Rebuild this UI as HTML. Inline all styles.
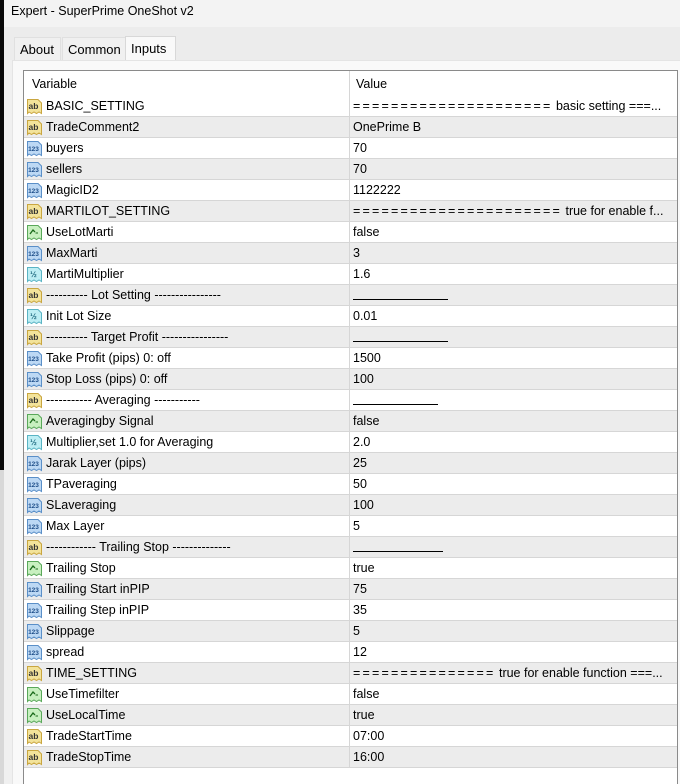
<!DOCTYPE html>
<html><head><meta charset="utf-8"><style>
*{margin:0;padding:0;box-sizing:border-box}
html,body{width:680px;height:784px;overflow:hidden}
body{background:#f0f0f0;font-family:"Liberation Sans","Noto Sans CJK SC",sans-serif;font-size:12.5px;color:#000;position:relative}
.strip{position:absolute;left:0;top:0;width:4px;height:470px;background:#080808}
.strip2{position:absolute;left:0;top:470px;width:4px;height:314px;background:#d8d8d8}
.title{position:absolute;left:4px;top:0;right:0;height:27px;background:#f3f3f3;padding:4px 0 0 7px;font-size:12.5px}
.tabs{position:absolute;left:4px;top:27px;right:0;height:33px;background:#ececec}
.tab{position:absolute;top:10px;height:23px;border:1px solid #e0e0e0;border-bottom:none;background:#f0f0f0;padding:4px 5px 0;font-size:13px}
.panel{position:absolute;left:12px;top:60px;right:0;bottom:0;background:#f9f9f9;border-left:1px solid #e4e4e4;border-top:1px solid #e4e4e4}
.tbl{position:absolute;left:23px;top:70px;width:655px;height:714px;background:#fff;border:1px solid #8a8a8a;border-bottom:none;overflow:hidden}
.hdr{position:absolute;left:0;top:0;width:100%;height:25px}
.hdr span{position:absolute;top:6px}
.row{position:absolute;left:0;width:100%;height:21px;border-bottom:1px solid #d6d6d6}
.row.g{background:#ececec}
.row .n{position:absolute;left:22px;top:3px;white-space:nowrap}
.row .v{position:absolute;left:329px;top:3px;white-space:nowrap}
.row svg{position:absolute;left:2px;top:2px}
.div{position:absolute;left:325px;top:0;width:1px;height:697px;background:#d6d6d6;z-index:2}
.line{display:inline-block;border-bottom:1px solid #000;height:12px}
.eq{letter-spacing:2.2px}
</style></head><body>
<div class="strip"></div><div class="strip2"></div>
<div class="title">Expert - SuperPrime OneShot v2</div>
<div class="tabs">
<div class="tab" style="left:10px;width:47px">About</div>
<div class="tab" style="left:58px;width:66px">Common</div>
<div class="tab" style="left:121px;top:9px;height:24px;width:51px;background:#f9f9f9;border-color:#d8d8d8">Inputs</div>
</div>
<div class="panel"></div>
<div class="tbl">
<div class="hdr"><span style="left:8px">Variable</span><span style="left:332px">Value</span></div>
<div id="rows"></div>
<div class="div"></div>
</div>
<script>
var I={
ab:['#f3e39a','#c9a640','ab','#333'],
n:['#bcd8f4','#5a8fc8','123','#1f4f8a'],
h:['#bdeef4','#5ab4c4','½','#1f6a80'],
b:['#c8f0c0','#5aa85a','~','#1a6a1a']};
function ic(t){var c=I[t];var txt=t=='b'?'<path d="M4 10 L7 6 L9 8" stroke="#1a6a1a" stroke-width="1.3" fill="none"/><path d="M9.5 9 h2.5" stroke="#1a6a1a" stroke-width="1"/>':
'<text x="7.5" y="11" font-size="'+(t=='n'?6.5:(t=='h'?8:8.5))+'" text-anchor="middle" font-family="Liberation Sans" font-weight="bold" fill="'+c[3]+'">'+(t=='h'?'½':c[2])+'</text>';
return '<svg width="17" height="17" viewBox="0 0 17 17"><path d="M1.5 1.5 H12 L15.5 5 V15.5 L13 14 L10.5 15.5 L8 14 L5.5 15.5 L3 14 L1.5 15.5 Z" fill="'+c[0]+'" stroke="'+c[1]+'" stroke-width="1"/>'+txt+'</svg>';}
var L=function(w){return '<span class="line" style="width:'+w+'px"></span>'};
var E=function(n){return '<span class="eq">'+'='.repeat(n)+'</span>'};
var R=[['ab','BASIC_SETTING',E(21)+' basic setting ===...'],
['ab','TradeComment2',' OnePrime B'],['n','buyers','70'],['n','sellers','70'],['n','MagicID2','1122222'],
['ab','MARTILOT_SETTING',E(22)+' true for enable f...'],
['b','UseLotMarti','false'],['n','MaxMarti','3'],['h','MartiMultiplier','1.6'],
['ab','---------- Lot Setting ----------------',L(95)],['h','Init Lot Size','0.01'],
['ab','---------- Target Profit ----------------',L(95)],['n','Take Profit (pips) 0: off','1500'],['n','Stop Loss (pips) 0: off','100'],
['ab','----------- Averaging -----------',L(85)],['b','Averagingby Signal','false'],['h','Multiplier,set 1.0 for Averaging','2.0'],
['n','Jarak Layer (pips)','25'],['n','TPaveraging','50'],['n','SLaveraging','100'],['n','Max Layer','5'],
['ab','------------ Trailing Stop --------------',L(90)],['b','Trailing Stop','true'],['n','Trailing Start inPIP','75'],
['n','Trailing Step inPIP','35'],['n','Slippage','5'],['n','spread','12'],
['ab','TIME_SETTING',E(15)+' true for enable function ===...'],
['b','UseTimefilter','false'],['b','UseLocalTime','true'],['ab','TradeStartTime','07:00'],['ab','TradeStopTime','16:00']];
var h='';R.forEach(function(r,i){h+='<div class="row'+(i%2?' g':'')+'" style="top:'+(25+i*21)+'px">'+ic(r[0])+'<span class="n">'+r[1]+'</span><span class="v">'+r[2]+'</span></div>';});
document.getElementById('rows').innerHTML=h;
</script>
</body></html>
